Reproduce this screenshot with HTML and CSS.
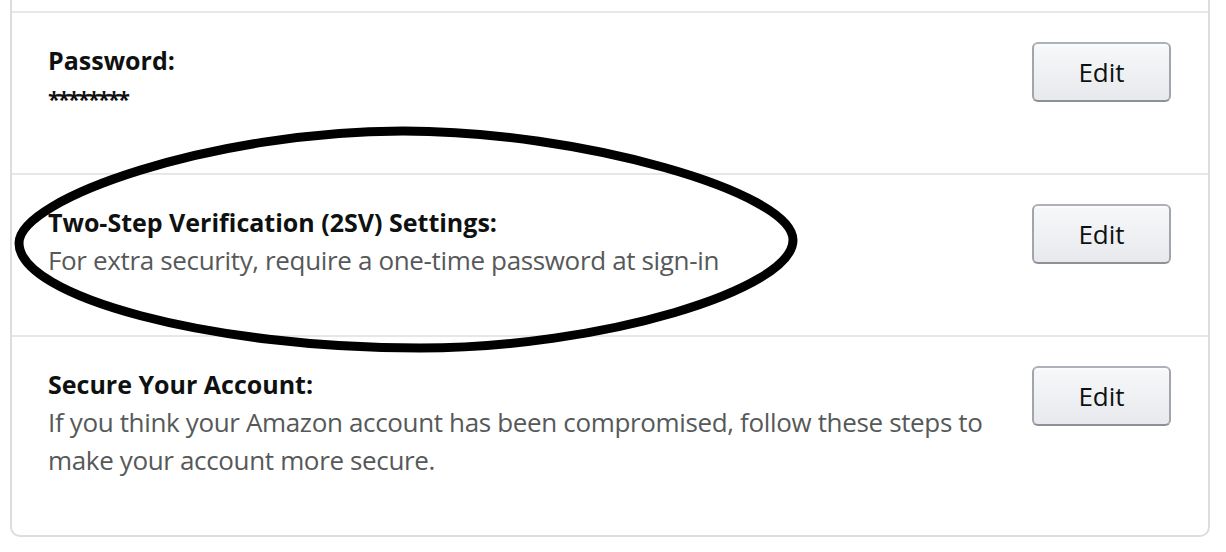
FILE: index.html
```html
<!DOCTYPE html>
<html lang="en">
<head>
<meta charset="utf-8">
<title>Login &amp; Security</title>
<link rel="stylesheet" href="styles.css">
</head>
<body>
<div class="page">
  <div class="card">
    <div class="row">
      <div class="info">
        <div class="label">Password:</div>
        <div class="value mask">********</div>
      </div>
      <button class="btn" type="button">Edit</button>
    </div>
    <div class="row">
      <div class="info">
        <div class="label">Two-Step Verification (2SV) Settings:</div>
        <div class="value">For extra security, require a one-time password at sign-in</div>
      </div>
      <button class="btn" type="button">Edit</button>
    </div>
    <div class="row">
      <div class="info">
        <div class="label">Secure Your Account:</div>
        <div class="value">If you think your Amazon account has been compromised, follow these steps to make your account more secure.</div>
      </div>
      <button class="btn" type="button">Edit</button>
    </div>
  </div>
  <svg class="annotation" width="1226" height="552" viewBox="0 0 1226 552" aria-hidden="true">
    <path d="M19 243 C19 198 215 131 403 131 C580 131 793 192 793 240 C793 290 600 348 420 348 C210 348 19 297 19 243 Z" fill="none" stroke="#000" stroke-width="9" stroke-linejoin="round"/>
  </svg>
</div>
</body>
</html>
```

FILE: styles.css
```css
html, body {
  margin: 0;
  padding: 0;
  background: #fff;
}

body {
  font-family: "Open Sans", "Noto Sans", "DejaVu Sans", sans-serif;
  color: #0f1111;
}

.page {
  position: relative;
  width: 1226px;
  height: 552px;
  overflow: hidden;
}

.card {
  margin: 0 16px 0 10px;
  border: 2px solid #dddddd;
  border-top: 0;
  border-radius: 0 0 10px 10px;
  padding-top: 11px;
}

.row {
  display: flex;
  align-items: flex-start;
  border-top: 2px solid #e7e7e7;
  padding: 28px 37px 56px 36px;
}

.info {
  flex: 1;
  margin-right: 30px;
}

.label {
  font-weight: 700;
  font-size: 25px;
  line-height: 38px;
  color: #0f1111;
}

.value {
  font-size: 26px;
  line-height: 38px;
  color: #565959;
  letter-spacing: -0.35px;
}

.mask {
  color: #0f1111;
  font-size: 22px;
  font-weight: 700;
  letter-spacing: -2px;
}

.btn {
  flex: none;
  width: 139px;
  height: 60px;
  margin-top: 1px;
  padding: 0;
  border: 2px solid;
  border-color: #adb1b8 #a2a6ac #8d9096;
  border-radius: 6px;
  background: linear-gradient(to bottom, #f7f8fa, #e7e9ec);
  box-shadow: inset 0 2px 0 rgba(255, 255, 255, 0.6);
  font-family: "Open Sans", "Noto Sans", sans-serif;
  font-size: 26px;
  color: #0f1111;
}

.annotation {
  position: absolute;
  top: 0;
  left: 0;
  pointer-events: none;
}
```
